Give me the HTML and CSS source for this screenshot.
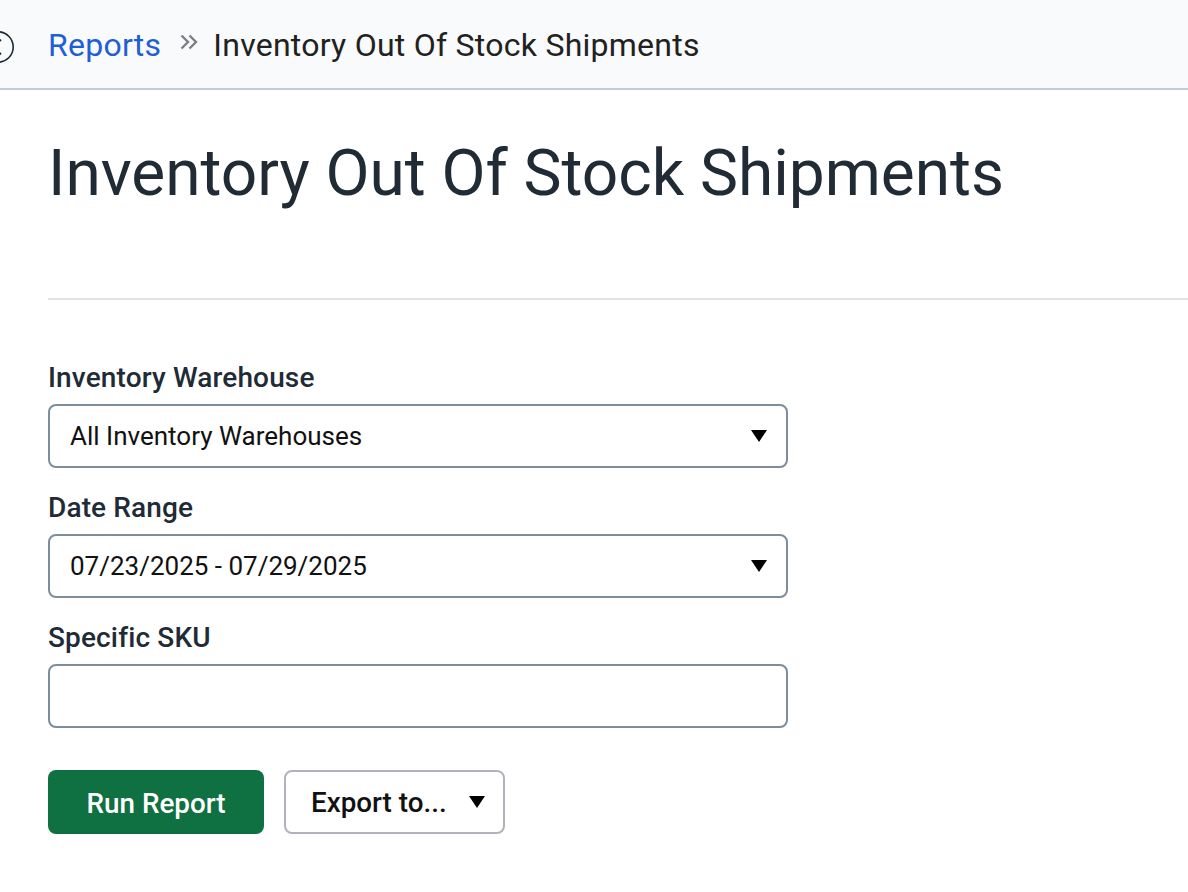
FILE: index.html
```html
<!DOCTYPE html>
<html lang="en">
<head>
<meta charset="utf-8">
<title>Inventory Out Of Stock Shipments</title>
<link rel="stylesheet" href="styles.css">
</head>
<body>
<header class="topbar">
  <svg class="back-icon" width="30" height="34" viewBox="0 0 30 34" aria-hidden="true"><circle cx="-2" cy="17" r="15.200" fill="none" stroke="#1f2933" stroke-width="1.600"/><path d="M-1 9 L1 11 M1 23 L-1 25" stroke="#1f2933" stroke-width="1.800" fill="none"/></svg>
  <a class="crumb-link" href="#">Reports</a>
  <svg class="crumb-sep" width="18" height="16" viewBox="0 0 18 16" aria-hidden="true"><path d="M1.500 1.500 L8 8 L1.500 14.500 M9.500 1.500 L16 8 L9.500 14.500" fill="none" stroke="#7b7f85" stroke-width="2.400"/></svg>
  <span class="crumb-current">Inventory Out Of Stock Shipments</span>
</header>
<main class="content">
  <h1 class="title">Inventory Out Of Stock Shipments</h1>
  <hr class="rule">
  <form class="form">
    <div class="field">
      <label class="label">Inventory Warehouse</label>
      <div class="control"><span>All Inventory Warehouses</span><i class="caret"></i></div>
    </div>
    <div class="field">
      <label class="label">Date Range</label>
      <div class="control"><span>07/23/2025 - 07/29/2025</span><i class="caret"></i></div>
    </div>
    <div class="field">
      <label class="label">Specific SKU</label>
      <div class="control"></div>
    </div>
    <div class="actions">
      <button type="button" class="btn-run">Run Report</button>
      <button type="button" class="btn-export">Export to...<i class="caret"></i></button>
    </div>
  </form>
</main>
</body>
</html>
```
FILE: styles.css
```css
* { box-sizing: border-box; }
html, body { margin: 0; padding: 0; }
body {
  background: #fff;
  font-family: Roboto, "Liberation Sans", sans-serif;
  color: #212b36;
  overflow: hidden;
}
.topbar {
  position: relative;
  height: 90px;
  background: #f9fafb;
  border-bottom: 2px solid #c4cdd5;
  display: flex;
  align-items: center;
  padding: 2px 0 0 48px;
  font-size: 32px;
  letter-spacing: 0.25px;
  line-height: 36px;
}
.back-icon { position: absolute; left: 0; top: 30px; }
.crumb-link { color: #1f5fd6; text-decoration: none; }
.crumb-sep { margin: 0 15px 6px 19px; }
.crumb-current { color: #212121; }
.content { padding-left: 48px; }
.title {
  margin: 0;
  padding-top: 46px;
  height: 208px;
  font-size: 64px;
  letter-spacing: -0.03px;
  line-height: 76px;
  font-weight: 400;
  color: #212b36;
}
.rule {
  margin: 0;
  border: 0;
  height: 2px;
  background: #e1e4e6;
}
.form { width: 740px; padding-top: 60px; }
.field { height: 130px; }
.label {
  display: block;
  font-size: 28px;
  letter-spacing: 0.14px;
  line-height: 36px;
  font-weight: 500;
  height: 44px;
  color: #212b36;
}
.control {
  height: 64px;
  border: 2px solid #7f8c9a;
  border-radius: 8px;
  background: #fff;
  display: flex;
  align-items: center;
  justify-content: space-between;
  padding: 0 19px 0 20px;
  font-size: 26px;
  color: #111;
}
.caret {
  display: block;
  width: 0;
  height: 0;
  border-left: 8px solid transparent;
  border-right: 8px solid transparent;
  border-top: 12px solid #000;
}
.actions { display: flex; gap: 20px; margin-top: 20px; }
.btn-run {
  width: 216px;
  height: 64px;
  padding: 2px 0 0;
  background: #0f7041;
  border: 0;
  border-radius: 8px;
  color: #fff;
  font: 500 27.8px Roboto, sans-serif;
}
.btn-export {
  width: 221px;
  height: 64px;
  background: #fff;
  border: 2px solid #b0b4ba;
  border-radius: 8px;
  color: #111;
  font: 500 27.8px Roboto, sans-serif;
  display: flex;
  align-items: center;
  justify-content: space-between;
  padding: 0 18px 0 25px;
}
```
